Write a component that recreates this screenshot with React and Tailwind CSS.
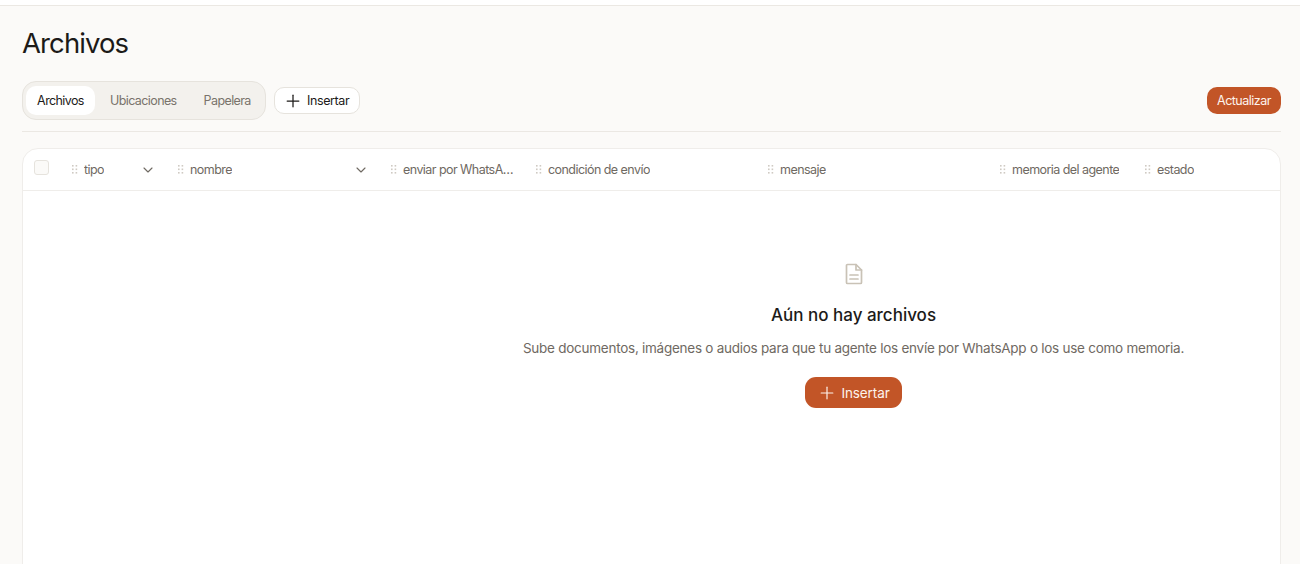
import React from "react";
import { Plus, ChevronDown } from "lucide-react";

const Grip = () => (
  <svg width="6" height="9" viewBox="0 0 6 9" className="shrink-0 fill-[#cfcac3]">
    {[0, 3.5, 7].map((y) => (
      <g key={y}>
        <rect x="0" y={y} width="1.6" height="1.6" />
        <rect x="3.6" y={y} width="1.6" height="1.6" />
      </g>
    ))}
  </svg>
);

const Col = ({ label, chevron, className }) => (
  <div className={`flex items-center pl-[1px] ${className}`}>
    <Grip />
    <span className="ml-[6px] truncate pt-[1px] text-[#6f6962]">{label}</span>
    {chevron && <ChevronDown className="mr-[21px] ml-auto text-[#6f6962]" size={16} strokeWidth={1.7} />}
  </div>
);

const FileIcon = () => (
  <svg width="18" height="22" viewBox="0 0 18 22" fill="none" stroke="#c9c2b6" strokeWidth="1.7" strokeLinejoin="round" strokeLinecap="round">
    <path d="M11 1.5H2.5a1 1 0 0 0-1 1v17a1 1 0 0 0 1 1h13a1 1 0 0 0 1-1V7z" />
    <path d="M11 1.5V7h5.5" />
    <path d="M5 12h8M5 16h8" />
  </svg>
);

export default function App() {
  return (
    <div className="h-[564px] overflow-hidden bg-[#fbfaf8] font-['Inter',sans-serif] text-[#1c1a18]">
      <div className="h-[6px] border-b border-[#ebe8e3] bg-white" />
      <div className="pr-[19px] pl-[22px]">
        <h1 className="pt-[19px] text-[27.5px] leading-[37px] font-normal tracking-[-0.9px]">Archivos</h1>
        <div className="mt-[19px] flex items-center border-b border-[#ebe8e3] pb-[11px]">
          <div className="flex h-[39px] w-[244px] items-center rounded-[14px] border border-[#e6e3dd] bg-[#f3f1ed] pl-[3px] text-[12.5px] tracking-[-0.6px]">
            <div className="flex h-[29px] w-[69px] items-center justify-center rounded-[10px] bg-white pt-[1px] text-[#1c1a18]">Archivos</div>
            <div className="ml-[15px] pt-[1px] text-[#79736b]">Ubicaciones</div>
            <div className="ml-[27px] pt-[1px] text-[#79736b]">Papelera</div>
          </div>
          <button className="ml-[8px] flex h-[27px] w-[86px] items-center rounded-[10px] border border-[#e6e3dd] bg-white pl-[8px] text-[12.5px] tracking-[-0.4px]">
            <Plus size={20} strokeWidth={1.5} />
            <span className="ml-[4px] pt-[1px]">Insertar</span>
          </button>
          <button className="ml-auto flex h-[27px] w-[74px] items-center justify-center rounded-[10px] bg-[#c25527] pt-[1px] text-[12.5px] tracking-[-0.5px] text-[#fdf3ec]">Actualizar</button>
        </div>
        <div className="mt-[16px] h-[500px] rounded-t-[16px] border border-[#efedea] bg-white">
          <div className="flex h-[42px] items-center border-b border-[#efedea] text-[12.5px] tracking-[-0.55px]">
            <div className="w-[48px] pl-[11px]">
              <div className="mb-[4px] h-[15px] w-[15px] rounded-[3px] border border-[#e6e3dd] bg-[#fbfaf8]" />
            </div>
            <Col label="tipo" chevron className="w-[106px]" />
            <Col label="nombre" chevron className="w-[213px]" />
            <Col label="enviar por WhatsA…" className="w-[145px]" />
            <Col label="condición de envío" className="w-[232px]" />
            <Col label="mensaje" className="w-[232px]" />
            <Col label="memoria del agente" className="w-[145px]" />
            <Col label="estado" className="w-[130px]" />
          </div>
          <div className="flex flex-col items-center pt-[72px] pl-[404px]">
            <FileIcon />
            <h2 className="mt-[18px] text-[17px] leading-[24px] font-medium">Aún no hay archivos</h2>
            <p className="mt-[11px] text-[13.5px] leading-[20px] tracking-[-0.26px] text-[#6f6962]">Sube documentos, imágenes o audios para que tu agente los envíe por WhatsApp o los use como memoria.</p>
            <button className="mt-[19px] flex h-[31px] w-[97px] items-center justify-center rounded-[11px] bg-[#c25527] pt-[1px] text-[13.5px] tracking-[-0.1px] text-[#fdf3ec]">
              <Plus size={20} strokeWidth={1.4} />
              <span className="ml-[4px]">Insertar</span>
            </button>
          </div>
        </div>
      </div>
    </div>
  );
}
